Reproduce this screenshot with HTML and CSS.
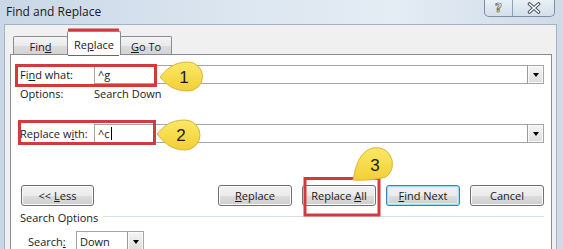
FILE: index.html
```html
<!DOCTYPE html>
<html>
<head>
<meta charset="utf-8">
<title>Find and Replace</title>
<link rel="stylesheet" href="styles.css">
</head>
<body>
<div class="window">
  <div class="titlebar">
    <span class="title">Find and Replace</span>
    <div class="caption">
      <span class="cap-btn help">?</span>
      <span class="cap-btn close">
        <svg width="14" height="12" viewBox="0 0 14 12">
          <path d="M2.5 2 L11.5 10 M11.5 2 L2.5 10" stroke="#4a5563" stroke-width="3.6" stroke-linecap="round"/>
          <path d="M2.5 2 L11.5 10 M11.5 2 L2.5 10" stroke="#ffffff" stroke-width="1.6" stroke-linecap="round"/>
        </svg>
      </span>
    </div>
  </div>
  <div class="client">
    <div class="tabs">
      <div class="tab tab-find">Fin<u>d</u></div>
      <div class="tab tab-replace active">Re<u>p</u>lace</div>
      <div class="tab tab-goto"><u>G</u>o To</div>
    </div>
    <div class="panel">
      <div class="field-row first">
        <span class="label">Fi<u>n</u>d what:</span>
        <div class="combo wide"><span class="value">^g</span><span class="drop"><span class="arrow"></span></span></div>
      </div>
      <div class="options-row">
        <span class="label">Options:</span>
        <span>Search Down</span>
      </div>
      <div class="field-row second">
        <span class="label">Replace w<u>i</u>th:</span>
        <div class="combo wide"><span class="value">^c<span class="caret"></span></span><span class="drop"><span class="arrow"></span></span></div>
      </div>
      <div class="buttons">
        <button class="btn less">&lt;&lt; <u>L</u>ess</button>
        <div class="btn-group">
          <button class="btn"><u>R</u>eplace</button>
          <button class="btn">Replace <u>A</u>ll</button>
          <button class="btn default"><u>F</u>ind Next</button>
          <button class="btn">Cancel</button>
        </div>
      </div>
      <div class="group-title">
        <span>Search Options</span>
        <span class="rule"></span>
      </div>
      <div class="search-row">
        <span class="label small">Search<u>:</u></span>
        <div class="combo narrow"><span class="value">Down</span><span class="drop"><span class="arrow"></span></span></div>
      </div>
    </div>
  </div>
  <svg class="annotations" width="563" height="249" viewBox="0 0 563 249">
    <defs>
      <linearGradient id="yel" x1="0" y1="0" x2="0" y2="1">
        <stop offset="0" stop-color="#fbe866"/>
        <stop offset="1" stop-color="#f3cf35"/>
      </linearGradient>
    </defs>
    <g fill="none" stroke="#d43a3c" stroke-width="3">
      <rect x="69.5" y="30" width="48" height="24.5"/>
      <rect x="16.5" y="65.5" width="139" height="20"/>
      <rect x="19.5" y="121.5" width="135" height="22"/>
      <rect x="305" y="178.5" width="74" height="36.5"/>
    </g>
    <g fill="url(#yel)" stroke="#d8b53a" stroke-width="1">
      <path d="M160 77 C166 70 173 62 188 62 A14.5 14.5 0 1 1 188 91 C173 91 166 84 160 77 Z"/>
      <path d="M157 134 C163 127 170 120 185 120 A15 15 0 1 1 185 150 C170 150 163 141 157 134 Z"/>
      <path d="M353 180 Q357 156 367 150.5 A16 16 0 1 1 385.5 177.2 Q371 181 353 180 Z"/>
    </g>
    <g class="num">
      <text x="184" y="82.5" text-anchor="middle">1</text>
      <text x="181" y="141" text-anchor="middle">2</text>
      <text x="375" y="171" text-anchor="middle">3</text>
    </g>
  </svg>
</div>
</body>
</html>
```

FILE: styles.css
```css
* { box-sizing: border-box; }
html, body { margin: 0; padding: 0; }
body {
  width: 563px;
  height: 249px;
  overflow: hidden;
  font-family: "Open Sans", "Segoe UI", sans-serif;
  font-size: 11px;
  color: #1a1a1a;
}
u { text-decoration: underline; text-underline-offset: 1px; }

.window {
  position: relative;
  width: 563px;
  height: 249px;
  overflow: hidden;
  display: flex;
  flex-direction: column;
  background: linear-gradient(to right, #c9d7e6 0%, #dde7f1 45%, #e4ecf4 70%, #cfdbe8 100%);
}

.titlebar {
  height: 24px;
  flex: none;
  display: flex;
  justify-content: space-between;
  align-items: flex-start;
  padding: 0 8px 0 6px;
}
.title {
  line-height: 24px;
  font-size: 12px;
}
.caption {
  display: flex;
  height: 17px;
  border: 1px solid #7f8fa3;
  border-top: none;
  border-radius: 0 0 5px 5px;
  overflow: hidden;
  background: linear-gradient(#e9f0f7, #d3dfeb);
}
.cap-btn {
  display: flex;
  align-items: center;
  justify-content: center;
}
.help {
  width: 28px;
  border-right: 1px solid #8fa0b3;
  font-family: "DejaVu Sans", sans-serif;
  font-weight: bold;
  font-size: 12px;
  color: #fff;
  -webkit-text-stroke: 0.7px #4a5563;
  line-height: 16px;
}
.close {
  width: 41px;
}

.client {
  flex: 1;
  margin: 0 6px 0 4px;
  background: #f0f0f0;
  border: 1px solid #a3b1c1;
  border-bottom: none;
  display: flex;
  flex-direction: column;
}

.tabs {
  height: 29px;
  flex: none;
  display: flex;
  align-items: flex-end;
  padding-left: 8px;
}
.tab {
  height: 18px;
  border: 1px solid #898c95;
  border-bottom: none;
  border-radius: 2px 2px 0 0;
  background: linear-gradient(#f4f4f4 0%, #eaeaea 50%, #dcdcdc 51%, #d4d4d4 100%);
  text-align: center;
  line-height: 19px;
}
.tab-find { width: 55px; }
.tab-replace { width: 54px; margin: 0 -1px; }
.tab-goto { width: 52px; }
.tab.active {
  position: relative;
  z-index: 1;
  height: 24px;
  margin-bottom: -1px;
  background: #fff;
  line-height: 18px;
  padding-top: 4px;
}

.panel {
  flex: 1;
  margin: 0 4px 0 5px;
  background: #fff;
  border: 1px solid #898c95;
  border-bottom: none;
  padding: 0 7px 0 9px;
  display: flex;
  flex-direction: column;
}

.field-row {
  display: flex;
  height: 19px;
  align-items: center;
}
.field-row.first { margin-top: 10px; }
.field-row.second { margin-top: 20px; }
.label {
  width: 74px;
  flex: none;
}
.label.small { width: 48px; }

.combo {
  position: relative;
  height: 19px;
  border: 1px solid #a5a5a5;
  background: #fff;
  display: flex;
  align-items: center;
  padding-left: 3px;
}
.combo.wide { flex: 1; }
.combo.narrow { width: 68px; height: 20px; }
.value {
  display: flex;
  align-items: center;
}
.caret {
  display: inline-block;
  width: 1px;
  height: 13px;
  background: #000;
  margin-left: 1px;
}
.drop {
  position: absolute;
  right: 0;
  top: 0;
  bottom: 0;
  width: 16px;
  border-left: 1px solid #9a9a9a;
  background: linear-gradient(#f5f5f5, #dcdcdc);
  box-shadow: inset 0 0 0 1px #fafafa;
  display: flex;
  align-items: center;
  justify-content: center;
}
.arrow {
  width: 0;
  height: 0;
  border-left: 3.5px solid transparent;
  border-right: 3.5px solid transparent;
  border-top: 4px solid #000;
  margin-top: 1px;
}

.options-row {
  display: flex;
  height: 20px;
  line-height: 20px;
}

.buttons {
  margin-top: 42px;
  display: flex;
  justify-content: space-between;
}
.btn-group {
  display: flex;
  gap: 10px;
}
.btn {
  width: 74px;
  height: 21px;
  padding: 0;
  font: inherit;
  color: #1a1a1a;
  border: 1px solid #707070;
  border-radius: 3px;
  background: linear-gradient(#f2f2f2 0%, #ebebeb 50%, #dddddd 51%, #cfcfcf 100%);
  box-shadow: inset 0 0 0 1px #fbfbfb;
  line-height: 18px;
}
.btn.less { width: 73px; margin-left: 1px; }
.btn.default {
  border-color: #3c7fb1;
  box-shadow: inset 0 0 0 1px #9fdcf6, inset 0 0 0 2px #d2eefb;
}

.group-title {
  height: 22px;
  display: flex;
  align-items: center;
}
.rule {
  flex: 1;
  height: 1px;
  margin-left: 5px;
  margin-top: -1px;
  background: #d5dfe5;
}

.search-row {
  display: flex;
  align-items: center;
  margin-top: 3px;
  padding-left: 8px;
}

.annotations {
  position: absolute;
  left: 0;
  top: 0;
  pointer-events: none;
}
.num text {
  font-family: "Liberation Sans", Arial, sans-serif;
  font-size: 17px;
  fill: #1a1a1a;
}
```
